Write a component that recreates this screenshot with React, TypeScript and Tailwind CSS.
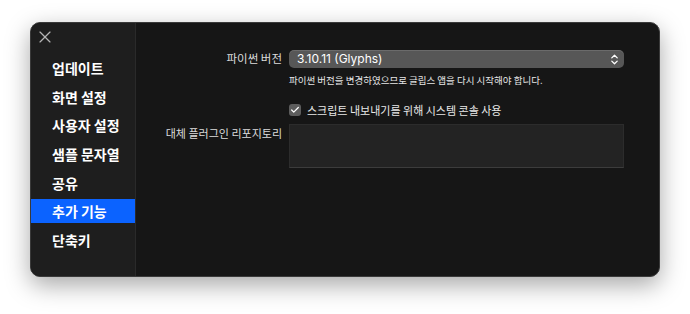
import { Check, ChevronsUpDown, X } from "lucide-react";

const items = ["업데이트", "화면 설정", "사용자 설정", "샘플 문자열", "공유", "추가 기능", "단축키"];

const font = { fontFamily: '"Noto Sans CJK KR", "Noto Sans", Inter, sans-serif' };

export default function App() {
  return (
    <div className="h-[314px] w-[690px] bg-white pl-[30px] pt-[22px]" style={font}>
      <div className="flex h-[255px] w-[630px] overflow-hidden rounded-[10px] border border-[#3a3a3a] bg-[#161616] shadow-[0_8px_24px_rgba(0,0,0,0.35)]">
        <aside className="flex w-[105px] flex-col border-r border-[#2a2a2a] bg-[#1e1e1e]">
          <div className="pl-[4px] pt-[4px] text-[#b5b5b5]">
            <X size={20} strokeWidth={1.4} />
          </div>
          <ul className="mt-[9px] flex flex-col gap-[4.7px]">
            {items.map((t) => (
              <li
                key={t}
                className={`flex h-[24px] items-center pl-[21px] text-[14px] font-bold leading-none text-white ${
                  t === "추가 기능" ? "bg-[#0b63ff]" : ""
                }`}
              >
                {t}
              </li>
            ))}
          </ul>
        </aside>
        <main className="flex-1 pt-[27px]">
          <div className="grid grid-cols-[146px_335px] gap-x-[7px]">
            <div className="flex h-[18px] items-center justify-end text-[11.5px] text-[#dcdcdc]">파이썬 버전</div>
            <div className="flex h-[18px] items-center justify-between rounded-[5px] bg-[#575757] pl-[8px] pr-[3px] text-[12px] text-white shadow-[inset_0_1px_0_rgba(255,255,255,0.12)]">
              <span style={{ fontFamily: 'Inter, "Noto Sans CJK KR", sans-serif' }}>3.10.11 (Glyphs)</span>
              <ChevronsUpDown size={13} strokeWidth={2.4} />
            </div>
            <div />
            <div className="mt-[6px] text-[9.5px] leading-[12px] text-[#e6e6e6]">
              파이썬 버전을 변경하였으므로 글립스 앱을 다시 시작해야 합니다.
            </div>
            <div />
            <div className="mt-[18px] flex items-center gap-[6px]">
              <span className="flex h-[12px] w-[12px] items-center justify-center rounded-[3px] bg-[#5d5d5d]">
                <Check size={10} strokeWidth={3} className="text-white" />
              </span>
              <span className="text-[11px] leading-none text-[#e8e8e8]">스크립트 내보내기를 위해 시스템 콘솔 사용</span>
            </div>
            <div className="mt-[8px] flex justify-end pt-[4px] text-[11px] leading-none text-[#dcdcdc]">
              대체 플러그인 리포지토리
            </div>
            <div className="mt-[8px] h-[44px] border border-[#2c2c2c] border-b-[#3c3c3c] bg-[#232323]" />
          </div>
        </main>
      </div>
    </div>
  );
}
